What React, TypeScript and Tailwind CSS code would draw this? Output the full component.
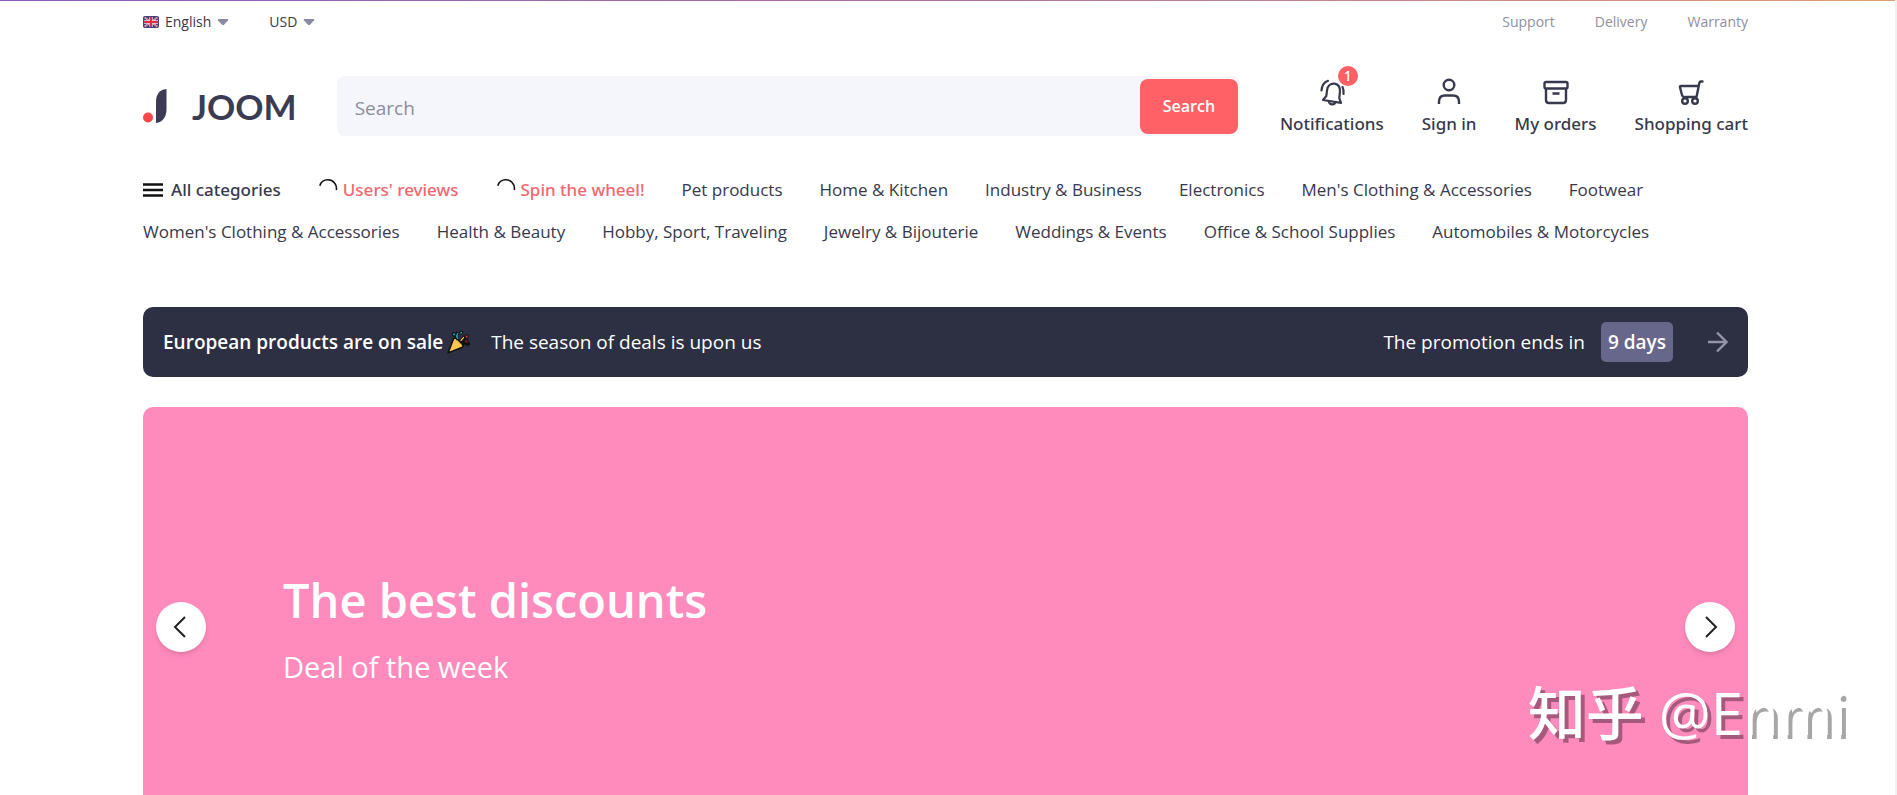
import type { ReactNode } from "react";
import clsx from "clsx";

type Category = { label: string; kind?: "menu" | "hot" };

const firstRow: Category[] = [
  { label: "All categories", kind: "menu" },
  { label: "Users' reviews", kind: "hot" },
  { label: "Spin the wheel!", kind: "hot" },
  { label: "Pet products" },
  { label: "Home & Kitchen" },
  { label: "Industry & Business" },
  { label: "Electronics" },
  { label: "Men's Clothing & Accessories" },
  { label: "Footwear" },
];

const secondRow: Category[] = [
  { label: "Women's Clothing & Accessories" },
  { label: "Health & Beauty" },
  { label: "Hobby, Sport, Traveling" },
  { label: "Jewelry & Bijouterie" },
  { label: "Weddings & Events" },
  { label: "Office & School Supplies" },
  { label: "Automobiles & Motorcycles" },
];

function FlagIcon() {
  return (
    <svg width="16" height="12" viewBox="0 0 16 12" aria-hidden="true">
      <rect width="16" height="12" rx="2" fill="#3b3b7c" />
      <path d="M1 1l14 10M15 1L1 11" stroke="#e6cfdc" strokeWidth="1.6" />
      <path d="M1 1l14 10M15 1L1 11" stroke="#d94a5e" strokeWidth="0.8" />
      <path d="M8 0.500v11M0.500 6h15" stroke="#f5dce4" strokeWidth="3.400" />
      <path d="M8 0.500v11M0.500 6h15" stroke="#d8304a" strokeWidth="2.200" />
      <rect x="0.500" y="0.500" width="15" height="11" rx="2" fill="none" stroke="#4b4378" />
    </svg>
  );
}

function CaretIcon() {
  return (
    <svg width="12" height="8" viewBox="0 0 12 8" aria-hidden="true">
      <path d="M1.400 1h9.200q1.200 0.200 0.500 1.200L7 6.800q-1 0.900-2 0L0.900 2.200Q0.200 1.200 1.400 1z" fill="#8a8aa5" />
    </svg>
  );
}

function Logo() {
  return (
    <a href="#" className="flex shrink-0 items-center gap-[25px]" aria-label="JOOM">
      <svg width="24" height="36" viewBox="0 0 24 36" aria-hidden="true">
        <path d="M23.500 1v20c0 7-3 13-10.500 14V14C13 7 16 1.500 23.500 1z" fill="#3b3c54" />
        <circle cx="5" cy="29.500" r="5" fill="#fa4848" />
      </svg>
      <span className="font-['Lato',sans-serif] text-[35px] leading-9 font-bold text-[#3b3c54]">JOOM</span>
    </a>
  );
}

function BellIcon() {
  return (
    <svg width="28" height="28" viewBox="0 0 28 28" fill="none" stroke="#37394c" strokeWidth="2.200" strokeLinecap="round" strokeLinejoin="round" aria-hidden="true">
      <path d="M5 22L23 24.800l-1.700-4.400.6-6.400c.4-4.500-1.600-7.700-5.400-8.300s-6.900 2-7.400 6.200L8.300 18z" />
      <path d="M10.800 23.200c.2 3.600 5.600 4.400 6.600 1" />
      <path d="M3.500 12.500C3.800 7.800 6 4.300 10 2.800M24.500 9c1 2 1.400 4.200 1 7" />
    </svg>
  );
}

function UserIcon() {
  return (
    <svg width="28" height="28" viewBox="0 0 28 28" fill="none" stroke="#37394c" strokeWidth="2.400" aria-hidden="true">
      <circle cx="14" cy="7" r="5.300" />
      <path d="M4 26v-2.500c0-4 2-6 6-6h8c4 0 6 2 6 6V26" />
    </svg>
  );
}

function OrdersIcon() {
  return (
    <svg width="28" height="28" viewBox="0 0 28 28" fill="none" stroke="#37394c" strokeWidth="2.400" strokeLinejoin="round" aria-hidden="true">
      <rect x="2.500" y="4" width="23" height="6.500" rx="1.500" />
      <path d="M4 10.500V22q0 3 3 3h14q3 0 3-3V10.500M10.500 15.500h7" />
    </svg>
  );
}

function CartIcon() {
  return (
    <svg width="28" height="28" viewBox="0 0 28 28" fill="none" stroke="#37394c" strokeWidth="2.400" strokeLinecap="round" strokeLinejoin="round" aria-hidden="true">
      <path d="M25.500 3.500H24q-1.400 0-1.700 1.400L19.500 19H8.500" />
      <path d="M21 8H4Q2.700 8 3 9.200L5 17q.4 1.800 2 2" />
      <circle cx="8" cy="23" r="2.800" />
      <circle cx="18" cy="23" r="2.800" />
    </svg>
  );
}

function HeaderLink({ label, badge, children }: { label: string; badge?: number; children: ReactNode }) {
  return (
    <a
      href="#"
      className="flex shrink-0 flex-col items-center gap-[6px] font-['Noto_Sans',sans-serif] text-[17px] leading-6 font-medium whitespace-nowrap text-[#37394c]"
    >
      <span className="relative">
        {children}
        {badge && (
          <span className="absolute -top-3 left-5 flex size-5 items-center justify-center rounded-full bg-[#ff6166] text-sm leading-5 text-white">
            {badge}
          </span>
        )}
      </span>
      {label}
    </a>
  );
}

function PopperIcon() {
  return (
    <svg width="24" height="24" viewBox="0 0 22 22" aria-hidden="true">
      <path d="M1 21L6 8q1-1.500 3.500.5l4.500 4.500q1.500 2-.5 3z" fill="#fbc54e" stroke="#111" strokeWidth="1.400" strokeLinejoin="round" />
      <path d="M10 8.500q-3-3.500 0-6M12 11l4.500-5M14 13q3-3 6 1" fill="none" stroke="#111" strokeWidth="3.400" />
      <path d="M10 8q-2-3 0-5" fill="none" stroke="#2a9cae" strokeWidth="1.500" />
      <path d="M12.500 10l3-3.500" stroke="#fbc54e" strokeWidth="1.200" />
      <path d="M15 11l3-2.500 2.500 4z" fill="#9d2732" stroke="#111" />
      <circle cx="6.500" cy="4" r="1.600" fill="#278eb0" stroke="#111" />
      <circle cx="13" cy="2.500" r="1.400" fill="#35a8a0" stroke="#111" />
      <circle cx="18" cy="6" r="1.600" fill="#c3333c" stroke="#111" />
    </svg>
  );
}

function CategoryRow({ items }: { items: Category[] }) {
  return (
    <ul className="flex gap-[37px]">
      {items.map((item) => (
        <li key={item.label}>
          <a
            href="#"
            className={clsx(
              "flex items-center whitespace-nowrap",
              item.kind && "font-['Noto_Sans',sans-serif] font-medium",
              item.kind === "menu" && "gap-2",
              item.kind === "hot" && "gap-1 text-[#f0686e]"
            )}
          >
            {item.kind === "menu" && (
              <svg width="20" height="14" viewBox="0 0 20 14" aria-hidden="true">
                <path d="M0 1.500h20M0 7h20M0 12.500h20" stroke="#111" strokeWidth="2.600" />
              </svg>
            )}
            {item.kind === "hot" && (
              <svg width="21" height="22" viewBox="0 0 21 22" fill="none" aria-hidden="true">
                <path d="M1.800 6.700A8.500 8.500 0 0 1 10 0.800A8.500 8.500 0 0 1 18.300 11" stroke="#111" strokeWidth="1.600" />
              </svg>
            )}
            {item.label}
          </a>
        </li>
      ))}
    </ul>
  );
}

function ArrowButton({ side }: { side: "left" | "right" }) {
  return (
    <button
      type="button"
      aria-label={side === "left" ? "Previous slide" : "Next slide"}
      className={clsx(
        "absolute top-[195px] flex size-[50px] items-center justify-center rounded-full bg-white shadow-md",
        side === "left" ? "left-[13px]" : "right-[13px]"
      )}
    >
      <svg width="24" height="24" viewBox="0 0 24 24" fill="none" stroke="#222" strokeWidth="2" aria-hidden="true">
        <path d={side === "left" ? "M16 2L6 12l10 10" : "M8 2l10 10L8 22"} />
      </svg>
    </button>
  );
}

export default function App() {
  return (
    <div className="relative h-screen overflow-hidden bg-white pr-[6px] font-['Open_Sans',sans-serif] text-[#37394c]">
      <div className="absolute inset-x-0 top-0 h-px bg-linear-to-r from-[#8a5cc0] via-[#b0709c] to-[#e0a070]" />
      <div className="absolute inset-y-0 right-0 w-[2px] bg-[#f1f1f1]" />
      <div className="mx-auto max-w-[1605px]">
        <div className="flex h-[43px] items-center justify-between text-sm">
          <div className="flex gap-10">
            <button type="button" className="flex items-center gap-[6px]">
              <FlagIcon />
              English
              <CaretIcon />
            </button>
            <button type="button" className="flex items-center gap-[6px]">
              USD
              <CaretIcon />
            </button>
          </div>
          <nav className="flex gap-10 text-[#8f90a0]">
            <a href="#">Support</a>
            <a href="#">Delivery</a>
            <a href="#">Warranty</a>
          </nav>
        </div>

        <header className="mt-[33px] flex h-[60px] items-center">
          <Logo />
          <form className="ml-10 flex h-[60px] flex-1 items-center rounded-lg bg-[#f5f6fb] pr-[2px]">
            <input
              type="search"
              aria-label="Search"
              placeholder="Search"
              className="h-full min-w-0 flex-1 bg-transparent px-[18px] pt-1 text-[19px] outline-none placeholder:text-[#8b8c9d]"
            />
            <button type="button" className="h-[55px] w-[98px] rounded-lg bg-[#ff6166] text-base font-semibold text-white">
              Search
            </button>
          </form>
          <nav className="ml-10 flex gap-[38px] pt-[2px]">
            <HeaderLink label="Notifications" badge={1}>
              <BellIcon />
            </HeaderLink>
            <HeaderLink label="Sign in">
              <UserIcon />
            </HeaderLink>
            <HeaderLink label="My orders">
              <OrdersIcon />
            </HeaderLink>
            <HeaderLink label="Shopping cart">
              <CartIcon />
            </HeaderLink>
          </nav>
        </header>

        <nav className="mt-[42px] flex flex-col gap-[18px] text-[17px] leading-6">
          <CategoryRow items={firstRow} />
          <CategoryRow items={secondRow} />
        </nav>

        <a href="#" className="mt-[63px] flex h-[70px] items-center rounded-[10px] bg-[#2d2f43] px-5 text-[19px] text-white">
          <strong className="font-semibold">European products are on sale</strong>
          <span className="ml-1">
            <PopperIcon />
          </span>
          <span className="ml-5">The season of deals is upon us</span>
          <span className="ml-auto">The promotion ends in</span>
          <span className="ml-4 flex h-10 items-center rounded-[5px] bg-[#66678a] px-[7px] font-semibold">9 days</span>
          <svg className="ml-[35px]" width="20" height="22" viewBox="0 0 20 22" fill="none" stroke="#9495a8" strokeWidth="2.400" aria-hidden="true">
            <path d="M0 11h19M9 1.500l9.500 9.500L9 20.500" />
          </svg>
        </a>

        <section className="relative mt-[30px] h-[420px] rounded-[10px] bg-[#ff8bbd] pt-[158px] pl-[140px] text-white">
          <h1 className="text-[47px] leading-[70px] font-semibold">The best discounts</h1>
          <p className="mt-3 text-[29px] leading-10">Deal of the week</p>
          <ArrowButton side="left" />
          <ArrowButton side="right" />
        </section>
      </div>
      <div className="pointer-events-none absolute right-[50px] bottom-11 font-['Open_Sans','Noto_Sans_CJK_SC',sans-serif] text-[58px] leading-[76px] whitespace-nowrap text-white [text-shadow:4px_4px_0_#00000059]">
        <span className="font-medium">知乎</span> @Enmi
      </div>
    </div>
  );
}
